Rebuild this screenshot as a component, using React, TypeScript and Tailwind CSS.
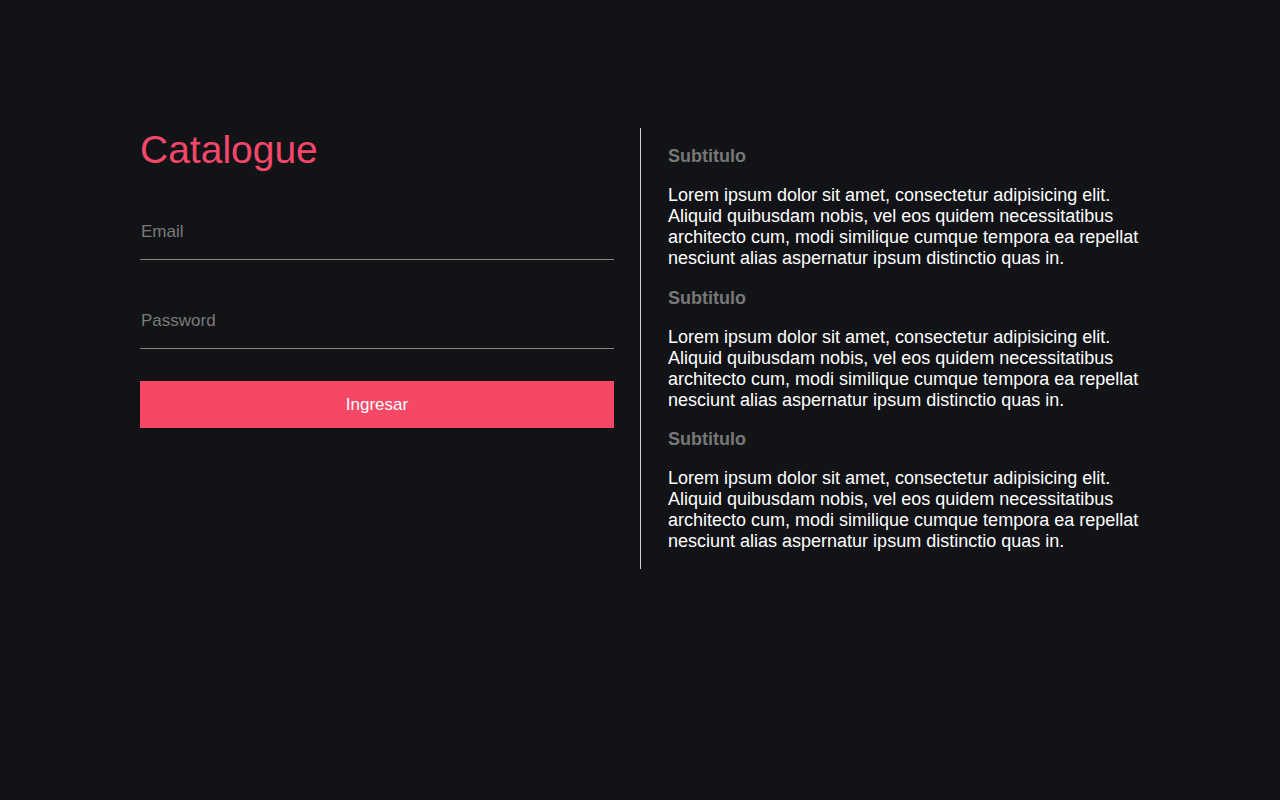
export default function App() {
  const text =
    "Lorem ipsum dolor sit amet, consectetur adipisicing elit. Aliquid quibusdam nobis, vel eos quidem necessitatibus architecto cum, modi similique cumque tempora ea repellat nesciunt alias aspernatur ipsum distinctio quas in.";
  return (
    <div
      className="min-h-screen w-full bg-[#121316] pt-[128px]"
      style={{ fontFamily: '"Liberation Sans", Arial, sans-serif' }}
    >
      <div className="mx-auto flex w-[1000px]">
        <div className="w-[500px] pr-[26px]">
          <h1 className="text-[39px] leading-[43px] text-[#f4476a]">Catalogue</h1>
          <input
            type="email"
            placeholder="Email"
            className="mt-[34px] block h-[55px] w-full border-b border-[#85857a] bg-transparent pl-px text-[17px] text-white placeholder-[#7a7a7a] outline-none"
          />
          <input
            type="password"
            placeholder="Password"
            className="mt-[34px] block h-[55px] w-full border-b border-[#85857a] bg-transparent pl-px text-[17px] text-white placeholder-[#7a7a7a] outline-none"
          />
          <button className="mt-[32px] block h-[47px] w-full bg-[#f54866] text-[17px] text-white">
            Ingresar
          </button>
        </div>
        <div className="w-[500px] border-l border-[#cfcfcf] pl-[27px] pt-[18px] pb-[17px]">
          {[0, 1, 2].map((i) => (
            <div key={i} className={i > 0 ? "mt-[18.5px]" : ""}>
              <h3 className="text-[18px] font-bold leading-[21px] text-[#777777]">Subtitulo</h3>
              <p className="mt-[18px] text-[18px] leading-[21px] text-white">{text}</p>
            </div>
          ))}
        </div>
      </div>
    </div>
  );
}
